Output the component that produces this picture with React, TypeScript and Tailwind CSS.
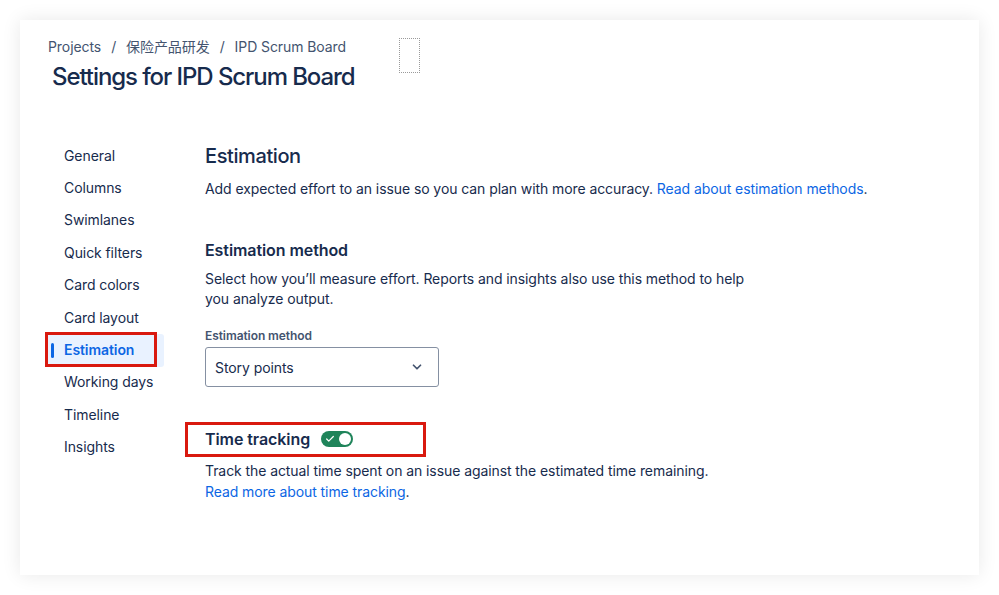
import { ChevronDown, Check } from 'lucide-react'

const navItems = [
  'General',
  'Columns',
  'Swimlanes',
  'Quick filters',
  'Card colors',
  'Card layout',
  'Estimation',
  'Working days',
  'Timeline',
  'Insights',
]

export default function App() {
  return (
    <div
      className="min-h-[595px] w-[999px] bg-white p-5 tracking-[-0.005em] text-[#172b4d]"
      style={{ fontFamily: 'Inter, "Noto Sans CJK SC", sans-serif' }}
    >
      <div className="h-[555px] bg-white shadow-[0_0_18px_rgba(0,0,0,0.09)] pl-7 pt-[17px]">
        {/* Header */}
        <div className="flex items-start">
          <div>
            <div className="flex items-center text-[14px] leading-5 text-[#44546f]">
              <span>Projects</span>
              <span className="mx-[10px]">/</span>
              <span>保险产品研发</span>
              <span className="mx-[10px]">/</span>
              <span>IPD Scrum Board</span>
            </div>
            <h1 className="mt-[4px] ml-1 text-[24px] font-medium leading-8 tracking-[-0.045em] text-[#172b4d]">
              Settings for IPD Scrum Board
            </h1>
          </div>
          <div className="ml-[44px] mt-[1px] h-[35px] w-[21px] border border-dotted border-[#9a9a9a]" />
        </div>

        <div className="mt-[45px] flex">
          {/* Sidebar */}
          <nav className="w-[157px] shrink-0 pt-[1px]">
            {navItems.map((item) =>
              item === 'Estimation' ? (
                <div key={item} className="relative h-[32.4px] -ml-[2px]">
                  <div className="absolute left-[1px] top-[1px] h-[33px] w-[117px] rounded-[3px] bg-[#e9f2ff]" />
                  <div className="absolute left-[-1px] top-[-1px] h-[35px] w-[112px] border-[3px] border-[#d9190f]" />
                  <div className="absolute left-[5px] top-[10px] h-[15px] w-[3px] rounded-full bg-[#0c66e4]" />
                  <span className="absolute left-[18px] top-[7px] text-[14px] font-semibold leading-5 text-[#0c66e4]">
                    {item}
                  </span>
                </div>
              ) : (
                <div key={item} className="flex h-[32.4px] items-center pl-4 text-[14px] text-[#172b4d]">
                  {item}
                </div>
              ),
            )}
          </nav>

          {/* Main */}
          <main className="pt-[6px]">
            <h2 className="text-[20px] font-medium leading-6 tracking-[-0.02em]">Estimation</h2>
            <p className="mt-[11px] text-[14px] leading-5">
              Add expected effort to an issue so you can plan with more accuracy.{' '}
              <a className="text-[#0c66e4]">Read about estimation methods</a>.
            </p>

            <h3 className="mt-[41px] text-[16px] font-semibold leading-5">Estimation method</h3>
            <p className="mt-[9px] w-[550px] text-[14px] leading-5">
              Select how you’ll measure effort. Reports and insights also use this method to help you analyze output.
            </p>

            <label className="mt-[19px] block text-[12px] font-semibold leading-4 text-[#44546f]">
              Estimation method
            </label>
            <div className="mt-[3px] flex h-[40px] w-[234px] items-center justify-between rounded-[3px] border border-[#8590a2] pl-[9px] pr-[14px]">
              <span className="text-[14px]">Story points</span>
              <ChevronDown size={14} strokeWidth={3} className="text-[#44546f]" />
            </div>

            <div className="relative mt-[42px]">
              <div className="absolute left-[-20px] top-[-7px] h-[35px] w-[241px] border-[3px] border-[#d9190f]" />
              <div className="flex items-center">
                <h3 className="text-[16px] font-semibold leading-5">Time tracking</h3>
                <div className="ml-[11px] flex h-4 w-8 items-center rounded-full bg-[#1f845a] px-[2px]">
                  <Check size={10} strokeWidth={3} className="ml-[2px] text-white" />
                  <div className="ml-auto h-3 w-3 rounded-full bg-white" />
                </div>
              </div>
            </div>
            <p className="mt-[11px] text-[14px] leading-[21px]">
              Track the actual time spent on an issue against the estimated time remaining.
              <br />
              <a className="text-[#0c66e4]">Read more about time tracking</a>.
            </p>
          </main>
        </div>
      </div>
    </div>
  )
}
